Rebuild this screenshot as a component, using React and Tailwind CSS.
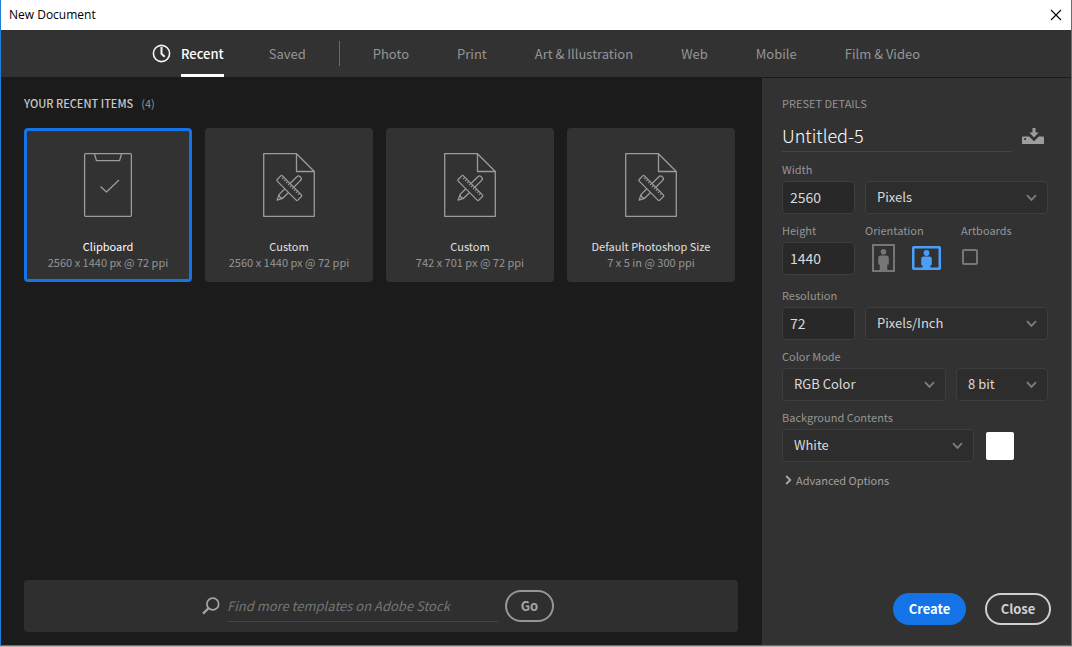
import { useState } from "react";

const recentItems = [
  { name: "Clipboard", detail: "2560 x 1440 px @ 72 ppi", icon: "clipboard" },
  { name: "Custom", detail: "2560 x 1440 px @ 72 ppi", icon: "document" },
  { name: "Custom", detail: "742 x 701 px @ 72 ppi", icon: "document" },
  { name: "Default Photoshop Size", detail: "7 x 5 in @ 300 ppi", icon: "document" },
];

const categories = ["Photo", "Print", "Art & Illustration", "Web", "Mobile", "Film & Video"];

function ClipboardIcon() {
  return (
    <svg width="52" height="64" viewBox="0 0 52 64" fill="none" stroke="#9b9b9b" strokeWidth="1.3" strokeLinejoin="round" aria-hidden="true">
      <rect x="2.6" y="0.7" width="46.8" height="62.6" rx="1" />
      <path d="M12.5 1l2 6.7h23l2-6.7" />
      <path d="M18.5 33.5l6 5.5L37 27" />
    </svg>
  );
}

function DocumentIcon() {
  return (
    <svg width="52" height="64" viewBox="0 0 52 64" fill="none" stroke="#9b9b9b" strokeWidth="1.3" strokeLinejoin="round" aria-hidden="true">
      <path d="M0.7 0.7H33.5L51.3 18.5V63.3H0.7Z" />
      <path d="M33.5 0.7V18.5H51.3" />
      <g transform="translate(26.3 35)">
        <g transform="rotate(45)">
          <path d="M-2.6 -4V-13.4Q-2.6 -15.6 -0.6 -15.6H0.6Q2.6 -15.6 2.6 -13.4V-4M-2.6 4V12L0 17.2L2.6 12V4M-2.6 12L0 13.2L2.6 12" />
        </g>
        <g transform="rotate(-45)">
          <rect x="-3.7" y="-14.6" width="7.4" height="29.2" rx="1.2" />
          <path strokeWidth="1.1" d="M3.7 -11.4H1.2M3.7 -8.6H1.2M3.7 -5.8H1.2M3.7 -3H1.2M3.7 -0.2H1.2M3.7 2.6H1.2M3.7 5.4H1.2M3.7 8.2H1.2M3.7 11H1.2" />
        </g>
      </g>
    </svg>
  );
}

function ClockIcon() {
  return (
    <svg width="19" height="19" viewBox="0 0 19 19" fill="none" stroke="#f5f5f5" aria-hidden="true">
      <circle cx="9.5" cy="9.5" r="8.1" strokeWidth="1.6" />
      <path d="M9.5 3v6.8l3.2 3" strokeWidth="2" />
    </svg>
  );
}

function PortraitIcon() {
  return (
    <svg width="23" height="28" viewBox="0 0 23 28" fill="#767676" aria-hidden="true">
      <rect x="1" y="1" width="21" height="26" fill="none" stroke="#767676" strokeWidth="2" />
      <circle cx="11.5" cy="7.7" r="2.8" />
      <path d="M6.2 14Q6.2 11.6 8.6 11.6H14.4Q16.8 11.6 16.8 14V20.5H15.3V26H7.7V20.5H6.2Z" />
    </svg>
  );
}

function LandscapeIcon() {
  return (
    <svg width="29" height="24" viewBox="0 0 29 24" fill="#4b9ffa" aria-hidden="true">
      <rect x="1.25" y="1.25" width="26.5" height="21.5" rx="0.5" fill="none" stroke="#4b9ffa" strokeWidth="2.5" />
      <circle cx="14.5" cy="7" r="2.9" />
      <path d="M9.2 13.2Q9.2 10.6 11.6 10.6H17.4Q19.8 10.6 19.8 13.2V19H18.5V22H10.5V19H9.2Z" />
    </svg>
  );
}

function SavePresetIcon() {
  return (
    <svg width="22" height="17" viewBox="0 0 22 17" fill="#9d9d9d" aria-hidden="true">
      <path d="M10.5 0h3v4.5h3.2L12 9.6 7.3 4.5h3.2z" />
      <path d="M1 8.5h6.2L12 13.2l4.8-4.7H21a1 1 0 0 1 1 1V16H0V9.5a1 1 0 0 1 1-1z" />
      <rect x="2.2" y="10.2" width="1.8" height="1.8" fill="#323232" />
    </svg>
  );
}

function Select({ label, options, className }) {
  return (
    <div className={"relative " + className}>
      <select
        aria-label={label}
        className="block h-[33px] w-full appearance-none rounded border border-[#3e3e3e] bg-[#2d2d2d] pr-8 pb-0.5 pl-[11px] text-[13px] text-[#dadada] outline-none"
      >
        {options.map((o) => (
          <option key={o}>{o}</option>
        ))}
      </select>
      <svg className="pointer-events-none absolute top-[13px] right-[11px]" width="11" height="8" viewBox="0 0 11 8" fill="none" stroke="#7d7d7d" strokeWidth="1.9" aria-hidden="true">
        <path d="M1 1.2l4.5 4.6L10 1.2" />
      </svg>
    </div>
  );
}

function NumberField({ id, label, value }) {
  return (
    <div className="w-[73px] shrink-0">
      <label htmlFor={id} className="mb-1 block text-[11px] leading-4 text-[#959595]">{label}</label>
      <input
        id={id}
        defaultValue={value}
        className="block h-[33px] w-full rounded border border-[#3e3e3e] bg-[#282828] px-[7px] pb-0.5 text-sm text-[#dadada] outline-none"
      />
    </div>
  );
}

function Tab({ children }) {
  return (
    <button type="button" className="h-[47px] text-[13px] text-[#959595]">{children}</button>
  );
}

export default function App() {
  const [selected, setSelected] = useState(0);
  return (
    <div className="flex min-h-screen flex-col bg-[#b5b5b5] pb-px font-['Noto_Sans_CJK_SC',sans-serif]">
      <div className="flex grow flex-col border-x border-b border-[#1e7fd8] bg-[#1b1b1b]">
        <header className="flex h-[30px] items-center justify-between bg-white pr-[9px] pl-2 font-['Open_Sans',sans-serif] text-black">
          <h1 className="text-xs">New Document</h1>
          <button type="button" aria-label="Close window">
            <svg width="12" height="12" viewBox="0 0 12 12" fill="none" stroke="#000" strokeWidth="1.1" aria-hidden="true">
              <path d="M1 1l10 10M11 1L1 11" />
            </svg>
          </button>
        </header>

        <nav className="flex items-center justify-center gap-12 border-b border-[#1b1b1b] bg-[#323232]">
          <div className="flex items-center gap-[33px]">
            <div className="flex items-center gap-[45px]">
              <div className="flex items-center gap-2.5">
                <ClockIcon />
                <button type="button" className="h-[47px] border-b-[3px] border-white pt-[3px] text-[13px] font-medium text-white">Recent</button>
              </div>
              <Tab>Saved</Tab>
            </div>
            <span className="h-[25px] w-px bg-[#6a6a6a]" />
            <Tab>{categories[0]}</Tab>
          </div>
          {categories.slice(1).map((c) => (
            <Tab key={c}>{c}</Tab>
          ))}
        </nav>

        <div className="flex grow">
          <main className="flex grow flex-col justify-between pt-[17px] pr-6 pb-[13px] pl-[23px]">
            <section>
              <h2 className="flex gap-2 text-[11px] leading-4 font-medium text-[#c8c8c8]">
                YOUR RECENT ITEMS <span className="font-normal text-[#959595]">(4)</span>
              </h2>
              <div className="mt-[17px] flex flex-wrap gap-[13px]">
                {recentItems.map((item, i) => (
                  <button
                    key={i}
                    type="button"
                    onClick={() => setSelected(i)}
                    className={
                      "flex w-[168px] flex-col items-center rounded border-[3px] bg-[#323232] pt-[22px] pb-[9px] text-[11px] leading-4 " +
                      (i === selected ? "border-[#1473e6]" : "border-[#323232]")
                    }
                  >
                    {item.icon === "clipboard" ? <ClipboardIcon /> : <DocumentIcon />}
                    <span className={"mt-[21px] whitespace-nowrap " + (i === selected ? "text-white" : "text-[#e0e0e0]")}>{item.name}</span>
                    <span className="whitespace-nowrap text-[#959595]">{item.detail}</span>
                  </button>
                ))}
              </div>
            </section>

            <form className="flex h-[52px] items-center justify-center rounded bg-[#2f2f2f] pr-1.5" onSubmit={(e) => e.preventDefault()}>
              <svg width="18" height="18" viewBox="0 0 18 18" fill="none" stroke="#a5a5a5" strokeWidth="1.7" aria-hidden="true">
                <circle cx="10.8" cy="7" r="5.9" />
                <path d="M6.5 11.2L1 16.6" strokeWidth="2.3" />
              </svg>
              <input
                aria-label="Find more templates on Adobe Stock"
                placeholder="Find more templates on Adobe Stock"
                className="ml-[7px] h-8 w-[271px] border-b border-[#444444] bg-transparent text-[13px] text-[#d5d5d5] italic outline-none placeholder:text-[#757575]"
              />
              <button type="submit" className="ml-[7px] h-8 w-[49px] rounded-full border-2 border-[#959595] text-[13px] font-bold text-[#a5a5a5]">Go</button>
            </form>
          </main>

          <aside className="flex w-[309px] shrink-0 flex-col justify-between bg-[#323232] pt-[17px] pr-5 pb-5 pl-5">
            <div className="pr-[3px]">
              <h2 className="text-[11px] leading-4 text-[#959595]">PRESET DETAILS</h2>
              <div className="mt-[9px] flex items-center justify-between pr-1">
                <input
                  aria-label="Document name"
                  defaultValue="Untitled-5"
                  className="h-8 w-[230px] border-b border-[#444444] bg-transparent pb-0.5 text-lg font-light text-white outline-none"
                />
                <button type="button" aria-label="Save preset"><SavePresetIcon /></button>
              </div>

              <div className="mt-[9px] flex items-end gap-2.5">
                <NumberField id="width" label="Width" value="2560" />
                <Select label="Units" options={["Pixels", "Inches", "Centimeters"]} className="grow" />
              </div>

              <div className="mt-2 flex gap-2.5">
                <NumberField id="height" label="Height" value="1440" />
                <div className="w-[86px] text-[11px] leading-4 text-[#959595]">
                  <span id="orientation" className="block">Orientation</span>
                  <div role="group" aria-labelledby="orientation" className="mt-1.5 flex items-center gap-[17px] pl-[7px]">
                    <button type="button" aria-label="Portrait" className="shrink-0"><PortraitIcon /></button>
                    <button type="button" aria-label="Landscape" aria-pressed="true" className="shrink-0"><LandscapeIcon /></button>
                  </div>
                </div>
                <div className="text-[11px] leading-4 text-[#959595]">
                  <label htmlFor="artboards" className="block">Artboards</label>
                  <input id="artboards" type="checkbox" className="mt-[11px] ml-px block size-4 appearance-none rounded-xs border-2 border-[#767676]" />
                </div>
              </div>

              <div className="mt-3 flex items-end gap-2.5">
                <NumberField id="resolution" label="Resolution" value="72" />
                <Select label="Resolution units" options={["Pixels/Inch", "Pixels/Centimeter"]} className="grow" />
              </div>

              <div className="mt-2 text-[11px] leading-4 text-[#959595]">Color Mode</div>
              <div className="mt-1 flex gap-2.5">
                <Select label="Color mode" options={["RGB Color", "Grayscale", "CMYK Color"]} className="grow" />
                <Select label="Bit depth" options={["8 bit", "16 bit", "32 bit"]} className="w-[92px]" />
              </div>

              <div className="mt-2 text-[11px] leading-4 text-[#959595]">Background Contents</div>
              <div className="mt-1 flex items-center gap-3">
                <Select label="Background contents" options={["White", "Black", "Transparent"]} className="w-48" />
                <button type="button" aria-label="Background color" className="size-7 rounded-xs bg-white" />
              </div>

              <button type="button" className="mt-2.5 flex items-center gap-1 pl-[3px] text-[11px] leading-4 text-[#a0a0a0]">
                <svg width="7" height="10" viewBox="0 0 7 10" fill="none" stroke="#a8a8a8" strokeWidth="1.9" aria-hidden="true">
                  <path d="M1.2 1l4 4-4 4" />
                </svg>
                Advanced Options
              </button>
            </div>

            <div className="flex justify-end gap-[19px] text-[13px] font-bold">
              <button type="button" className="h-8 w-[73px] rounded-full bg-[#1473e6] text-white">Create</button>
              <button type="button" className="h-8 w-[66px] rounded-full border-2 border-[#cfcfcf] text-[#cfcfcf]">Close</button>
            </div>
          </aside>
        </div>
      </div>
    </div>
  );
}
